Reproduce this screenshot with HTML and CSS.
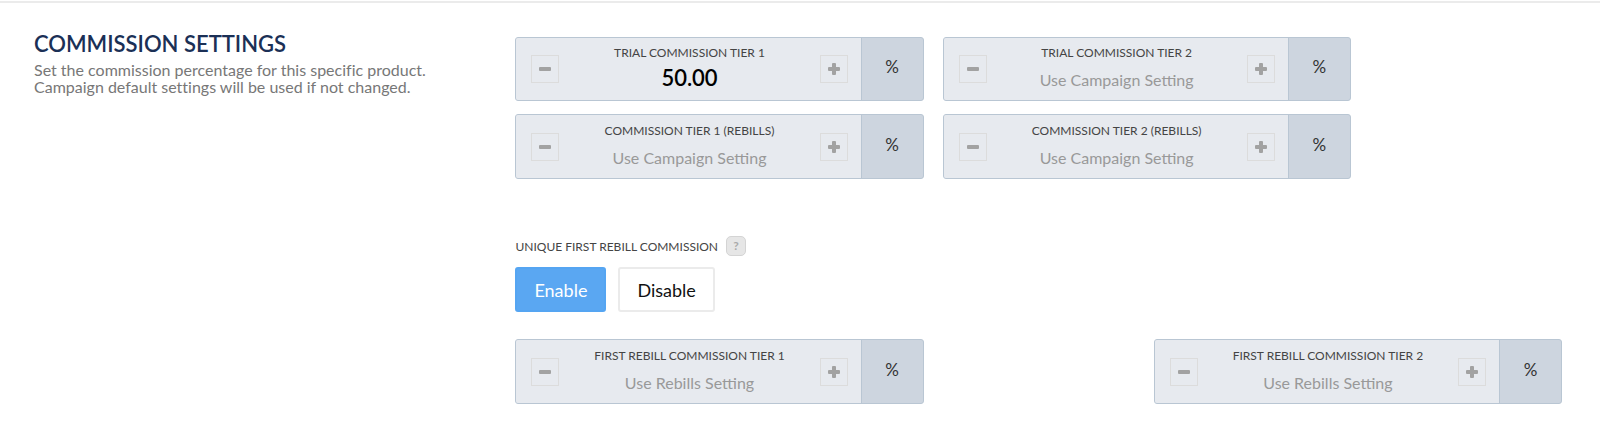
FILE: index.html
```html
<!DOCTYPE html>
<html lang="en">
<head>
  <meta charset="utf-8">
  <title>Commission Settings</title>
  <link rel="stylesheet" href="styles.css">
</head>
<body>
  <section class="settings">
    <div class="intro">
      <h2>COMMISSION SETTINGS</h2>
      <p>Set the commission percentage for this specific product.<br>Campaign default settings will be used if not changed.</p>
    </div>

    <div class="content">
      <div class="row first">
        <div class="field">
          <div class="spinner">
            <button type="button" class="step" aria-label="Decrease"><svg viewBox="0 0 12 12"><rect x="0" y="4" width="12" height="4" rx="1"/></svg></button>
            <div class="value">
              <label for="trial1">TRIAL COMMISSION TIER 1</label>
              <input type="text" id="trial1" value="50.00" placeholder="Use Campaign Setting">
            </div>
            <button type="button" class="step" aria-label="Increase"><svg viewBox="0 0 12 12"><path d="M4 1q0-1 1-1h2q1 0 1 1v3h3q1 0 1 1v2q0 1-1 1H8v3q0 1-1 1H5q-1 0-1-1V8H1Q0 8 0 7V5q0-1 1-1h3z"/></svg></button>
          </div>
          <span class="unit">%</span>
        </div>
        <div class="field">
          <div class="spinner">
            <button type="button" class="step" aria-label="Decrease"><svg viewBox="0 0 12 12"><rect x="0" y="4" width="12" height="4" rx="1"/></svg></button>
            <div class="value">
              <label for="trial2">TRIAL COMMISSION TIER 2</label>
              <input type="text" id="trial2" placeholder="Use Campaign Setting">
            </div>
            <button type="button" class="step" aria-label="Increase"><svg viewBox="0 0 12 12"><path d="M4 1q0-1 1-1h2q1 0 1 1v3h3q1 0 1 1v2q0 1-1 1H8v3q0 1-1 1H5q-1 0-1-1V8H1Q0 8 0 7V5q0-1 1-1h3z"/></svg></button>
          </div>
          <span class="unit">%</span>
        </div>
      </div>

      <div class="row">
        <div class="field">
          <div class="spinner">
            <button type="button" class="step" aria-label="Decrease"><svg viewBox="0 0 12 12"><rect x="0" y="4" width="12" height="4" rx="1"/></svg></button>
            <div class="value">
              <label for="tier1">COMMISSION TIER 1 (REBILLS)</label>
              <input type="text" id="tier1" placeholder="Use Campaign Setting">
            </div>
            <button type="button" class="step" aria-label="Increase"><svg viewBox="0 0 12 12"><path d="M4 1q0-1 1-1h2q1 0 1 1v3h3q1 0 1 1v2q0 1-1 1H8v3q0 1-1 1H5q-1 0-1-1V8H1Q0 8 0 7V5q0-1 1-1h3z"/></svg></button>
          </div>
          <span class="unit">%</span>
        </div>
        <div class="field">
          <div class="spinner">
            <button type="button" class="step" aria-label="Decrease"><svg viewBox="0 0 12 12"><rect x="0" y="4" width="12" height="4" rx="1"/></svg></button>
            <div class="value">
              <label for="tier2">COMMISSION TIER 2 (REBILLS)</label>
              <input type="text" id="tier2" placeholder="Use Campaign Setting">
            </div>
            <button type="button" class="step" aria-label="Increase"><svg viewBox="0 0 12 12"><path d="M4 1q0-1 1-1h2q1 0 1 1v3h3q1 0 1 1v2q0 1-1 1H8v3q0 1-1 1H5q-1 0-1-1V8H1Q0 8 0 7V5q0-1 1-1h3z"/></svg></button>
          </div>
          <span class="unit">%</span>
        </div>
      </div>

      <div class="unique">
        <div class="caption">
          <span id="unique-label">UNIQUE FIRST REBILL COMMISSION</span>
          <button type="button" class="help">?</button>
        </div>
        <div class="toggle" role="group" aria-labelledby="unique-label">
          <button type="button" class="btn active">Enable</button>
          <button type="button" class="btn">Disable</button>
        </div>
      </div>

      <div class="row spread">
        <div class="field">
          <div class="spinner">
            <button type="button" class="step" aria-label="Decrease"><svg viewBox="0 0 12 12"><rect x="0" y="4" width="12" height="4" rx="1"/></svg></button>
            <div class="value">
              <label for="rebill1">FIRST REBILL COMMISSION TIER 1</label>
              <input type="text" id="rebill1" placeholder="Use Rebills Setting">
            </div>
            <button type="button" class="step" aria-label="Increase"><svg viewBox="0 0 12 12"><path d="M4 1q0-1 1-1h2q1 0 1 1v3h3q1 0 1 1v2q0 1-1 1H8v3q0 1-1 1H5q-1 0-1-1V8H1Q0 8 0 7V5q0-1 1-1h3z"/></svg></button>
          </div>
          <span class="unit">%</span>
        </div>
        <div class="field">
          <div class="spinner">
            <button type="button" class="step" aria-label="Decrease"><svg viewBox="0 0 12 12"><rect x="0" y="4" width="12" height="4" rx="1"/></svg></button>
            <div class="value">
              <label for="rebill2">FIRST REBILL COMMISSION TIER 2</label>
              <input type="text" id="rebill2" placeholder="Use Rebills Setting">
            </div>
            <button type="button" class="step" aria-label="Increase"><svg viewBox="0 0 12 12"><path d="M4 1q0-1 1-1h2q1 0 1 1v3h3q1 0 1 1v2q0 1-1 1H8v3q0 1-1 1H5q-1 0-1-1V8H1Q0 8 0 7V5q0-1 1-1h3z"/></svg></button>
          </div>
          <span class="unit">%</span>
        </div>
      </div>
    </div>
  </section>
</body>
</html>
```
FILE: styles.css
```css
* { box-sizing: border-box; }

body {
  margin: 0;
  background: #fff;
  font-family: Lato, "Open Sans", sans-serif;
  font-variant-ligatures: none;
  color: #444;
}

button, input { font-family: inherit; }

.settings {
  display: grid;
  grid-template-columns: 46fr 100fr;
  margin-top: 1px;
  padding: 34px 38px 0 34px;
  border-top: 2px solid #ebebeb;
}

.intro h2 {
  margin: -6px 0 4px;
  color: #1b3056;
  font-size: 22px;
  line-height: 26px;
  font-weight: 600;
}

.intro p {
  margin: 0;
  color: #777;
  font-size: 16px;
  line-height: 17px;
}

.row {
  display: flex;
  gap: 19px;
  margin-bottom: 13px;
}

.spread { justify-content: space-between; }

.field {
  display: flex;
  width: 39%;
  height: 65px;
  border: 1px solid #b9c6d3;
  border-radius: 3px;
  background: #cdd5df;
  overflow: hidden;
}

.spinner {
  display: flex;
  flex: 1;
  padding: 8px 13px 0 15px;
  border-right: 1px solid #b9c6d3;
  background: #e7eaef;
}

.step {
  display: flex;
  align-items: center;
  justify-content: center;
  width: 28px;
  height: 28px;
  margin-top: 10px;
  padding: 0;
  border: 1px solid #dcdcdc;
  background: none;
}

.step svg {
  width: 12px;
  height: 12px;
  fill: #a2a2a2;
}

.value {
  display: flex;
  flex-direction: column;
  flex: 1;
  gap: 4px;
  min-width: 0;
  text-align: center;
}

.value label {
  font-size: 12px;
  line-height: 16px;
}

.value input {
  width: 100%;
  height: 24px;
  padding: 0;
  border: 0;
  outline: 0;
  background: none;
  color: #000;
  font-size: 22px;
  font-weight: 600;
  text-align: center;
}

.value input::placeholder {
  color: #999;
  font-size: 16px;
  font-weight: 400;
  opacity: 1;
}

.unit {
  width: 61px;
  padding-top: 19px;
  color: #333;
  font-size: 17px;
  line-height: 22px;
  text-align: center;
}

.first .field { height: 64px; }
.first .spinner { padding-top: 7px; }
.first .unit { padding-top: 18px; }

.unique { padding: 44px 0 27px; }

.caption {
  display: flex;
  align-items: center;
  gap: 8px;
  margin-bottom: 11px;
  font-size: 12px;
}

.help {
  width: 20px;
  height: 20px;
  padding: 0;
  border: 1px solid #d4d4d4;
  border-radius: 5px;
  background: #e6e6e6;
  color: #aaa;
  font-size: 12px;
  font-weight: 700;
  line-height: 16px;
}

.toggle {
  display: flex;
  gap: 12px;
}

.btn {
  height: 45px;
  padding: 0 17px;
  border: 2px solid #ebebeb;
  border-radius: 3px;
  background: #fff;
  color: #111;
  font-size: 18px;
}

.btn.active {
  border-color: #55a5f2;
  background: #5aa7f2;
  color: #fff;
}
```
